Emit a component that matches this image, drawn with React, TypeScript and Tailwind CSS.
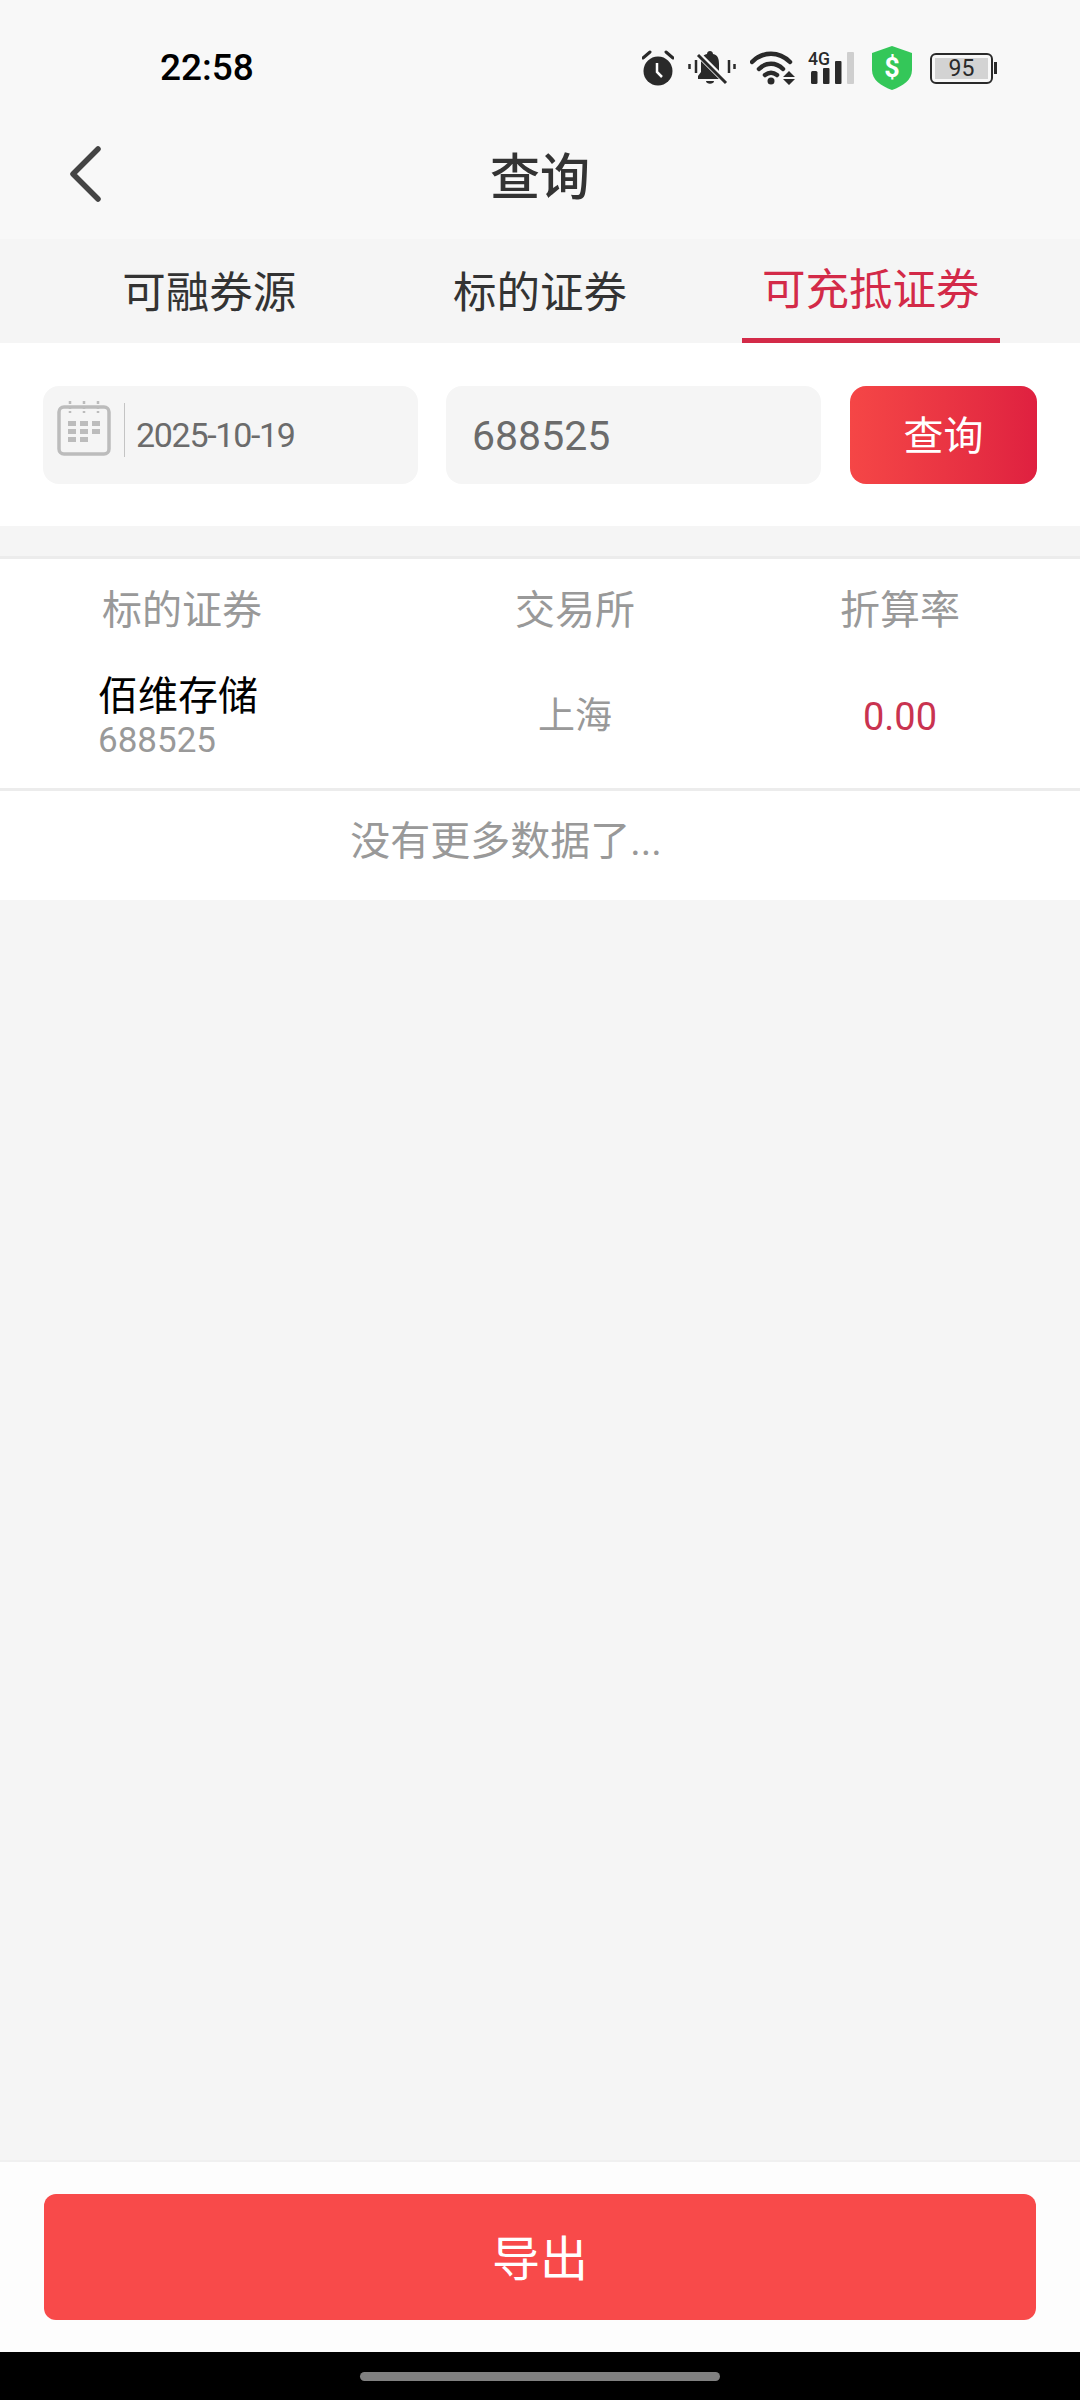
const font = { fontFamily: '"Roboto", "Noto Sans CJK SC", sans-serif' };

function StatusIcons() {
  return (
    <div className="flex items-center">
      {/* alarm */}
      <svg width="32" height="36" viewBox="0 0 32 36">
        <circle cx="16" cy="21" r="14.500" fill="#2a2a2a" />
        <path d="M1 8 8 2M31 8l-7-6" stroke="#2a2a2a" strokeWidth="3" strokeLinecap="round" />
        <path d="M15 13v9l5 5" stroke="#fff" strokeWidth="2.500" fill="none" />
      </svg>
      {/* muted bell */}
      <svg width="48" height="36" viewBox="0 0 48 36" className="ml-[14px]">
        <path d="M22 1c-1.500 0-3 1-3 3-5 1-6 5-6 10v8l-3 4v3h24v-3l-3-4v-8c0-5-1-9-6-10 0-2-1.500-3-3-3z" fill="#2a2a2a" />
        <path d="M18 31h8c0 3.500-8 3.500-8 0z" fill="#2a2a2a" />
        <path d="M11 5l28 28" stroke="#f8f8f8" strokeWidth="6" />
        <path d="M10 5l28 28" stroke="#2a2a2a" strokeWidth="3" />
        <path d="M1.500 14v5M8 10v13M41 10v13M46.500 14v5" stroke="#2a2a2a" strokeWidth="2.500" />
      </svg>
      {/* wifi */}
      <svg width="45" height="36" viewBox="0 0 45 36" className="ml-[14px]">
        <g fill="none" stroke="#2a2a2a" strokeWidth="4.500" strokeLinecap="round">
          <path d="M2 12C13 1 29 1 40 12" />
          <path d="M9 19c7-7 17-7 24 0" />
          <path d="M15 25c4-3 8-3 12 0" />
        </g>
        <circle cx="21" cy="31" r="3.500" fill="#2a2a2a" />
        <path d="M33 27l6-6 6 6zM33 29l6 6 6-6z" fill="#2a2a2a" />
      </svg>
      {/* 4G signal */}
      <svg width="46" height="42" viewBox="0 -4 46 42" className="ml-[13px]">
        <text x="0" y="14" fontSize="19" fontWeight="500" fill="#2a2a2a" fontFamily="Roboto, sans-serif" textLength="22" lengthAdjust="spacingAndGlyphs">4G</text>
        <rect x="3" y="20" width="6.500" height="13" rx="1.500" fill="#2a2a2a" />
        <rect x="15" y="17" width="6.500" height="16" rx="1" fill="#2a2a2a" />
        <rect x="27" y="10" width="6.500" height="23" rx="1" fill="#2a2a2a" />
        <rect x="39" y="1" width="7" height="32" rx="1" fill="#cfcfcf" />
      </svg>
      {/* shield */}
      <svg width="40" height="44" viewBox="0 0 40 44" className="ml-[18px]">
        <path d="M20 0 40 7v17c0 10-9 16-20 20C9 40 0 34 0 24V7z" fill="#34c759" />
        <text x="20" y="31" textAnchor="middle" fontSize="27" fontWeight="700" fill="#fff" fontFamily="Roboto, sans-serif">$</text>
      </svg>
      {/* battery */}
      <div className="ml-[18px] flex items-center">
        <div className="flex h-[31px] w-[63px] items-center rounded-[6px] border-[2px] border-[#2a2a2a] p-[3px]">
          <div className="flex h-full w-full items-center justify-center bg-[#d3d3d3] text-[23px] leading-none text-[#2a2a2a]">95</div>
        </div>
        <div className="ml-[1px] h-[12px] w-[3px] bg-[#2a2a2a]" />
      </div>
    </div>
  );
}

function CalendarIcon() {
  return (
    <svg width="54" height="56" viewBox="0 0 54 56" className="mb-[14px]">
      <rect x="2" y="7" width="50" height="47" rx="5" fill="none" stroke="#bcbcbc" strokeWidth="3.500" />
      <path d="M13 1v12M27 1v12M41 1v12" stroke="#bcbcbc" strokeWidth="2.500" strokeDasharray="3 2" />
      <g fill="#bcbcbc">
        <rect x="11" y="21" width="8" height="5" />
        <rect x="23" y="21" width="8" height="5" />
        <rect x="35" y="21" width="8" height="5" />
        <rect x="11" y="29" width="8" height="5" />
        <rect x="23" y="29" width="8" height="5" />
        <rect x="35" y="29" width="8" height="5" />
        <rect x="11" y="37" width="8" height="5" />
        <rect x="23" y="37" width="8" height="5" />
      </g>
    </svg>
  );
}

export default function App() {
  return (
    <div className="flex h-[2400px] w-[1080px] flex-col bg-[#f5f5f5]" style={font}>
      {/* Status bar + title */}
      <div className="bg-[#f8f8f8]">
        <div className="flex h-[120px] items-center justify-between pl-[160px] pr-[83px] pt-[16px]">
          <span className="text-[37px] font-medium text-black">22:58</span>
          <StatusIcons />
        </div>
        <div className="grid h-[119px] grid-cols-[1fr_auto_1fr] items-center pb-[4px]">
          <svg width="36" height="56" viewBox="0 0 36 56" className="mb-[8px] ml-[67px]">
            <path d="M31 3 6 28l25 25" fill="none" stroke="#444" strokeWidth="5.500" strokeLinecap="round" strokeLinejoin="round" />
          </svg>
          <h1 className="text-[50px] font-medium leading-none text-[#333]">查询</h1>
        </div>
      </div>

      {/* Tabs */}
      <div className="grid h-[104px] grid-cols-3 bg-[#f5f5f5] px-[44px] text-[43.500px] text-[#333]">
        <div className="flex items-center justify-center pt-[5px]">可融券源</div>
        <div className="flex items-center justify-center pt-[5px]">标的证券</div>
        <div className="flex items-center justify-center">
          <div className="flex h-full w-[258px] items-center justify-center border-b-[5px] border-[#d32a48] pt-[5px] text-[#d32a48]">可充抵证券</div>
        </div>
      </div>

      {/* Search */}
      <div className="flex h-[183px] items-center bg-white pl-[43px] pr-[43px]">
        <div className="flex h-[98px] w-[375px] items-center rounded-[16px] bg-[#f5f5f5] pl-[14px]">
          <CalendarIcon />
          <div className="mb-[10px] ml-[13px] h-[54px] w-[1px] bg-[#c4c4c4]" />
          <span className="ml-[11px] pt-[2px] text-[34px] tracking-[-1.300px] text-[#6b6b6b]">2025-10-19</span>
        </div>
        <div className="ml-[28px] flex h-[98px] w-[375px] items-center rounded-[16px] bg-[#f5f5f5] pl-[26px] pt-[5px] text-[41px] text-[#6b6b6b]">688525</div>
        <button className="ml-[29px] flex h-[98px] w-[187px] items-center justify-center rounded-[16px] bg-gradient-to-r from-[#f54646] to-[#df2040] pt-[5px] text-[40px] text-white">查询</button>
      </div>

      {/* Table */}
      <div className="mt-[30px] border-t-[3px] border-[#ececec] bg-white">
        <div className="grid h-[100px] grid-cols-[400px_350px_300px] items-center pt-[3px] text-[40px] text-[#999]">
          <div className="pl-[102px]">标的证券</div>
          <div className="text-center">交易所</div>
          <div className="text-center">折算率</div>
        </div>
        <div className="grid h-[132px] grid-cols-[400px_350px_300px] items-center border-b-[3px] border-[#ececec] pb-[13px]">
          <div className="pl-[98px]">
            <div className="text-[40px] leading-[48px] text-black">佰维存储</div>
            <div className="text-[35px] leading-[40px] text-[#999]">688525</div>
          </div>
          <div className="text-center text-[37px] text-[#999]">上海</div>
          <div className="text-center text-[38px] text-[#c93350]">0.00</div>
        </div>
        <div className="flex h-[109px] items-center justify-center pb-[7px] pr-[68px] text-[40px] text-[#999]">没有更多数据了...</div>
      </div>

      <div className="flex-1" />

      {/* Footer */}
      <div className="flex h-[192px] items-center border-t-[2px] border-[#f0f0f0] bg-[#fdfdfd] px-[44px]">
        <button className="flex h-[126px] w-full items-center justify-center rounded-[12px] bg-[#f84a4a] pt-[6px] text-[48px] text-white">导出</button>
      </div>
      <div className="flex h-[48px] items-center justify-center bg-black">
        <div className="h-[9px] w-[360px] rounded-full bg-[#808080]" />
      </div>
    </div>
  );
}
